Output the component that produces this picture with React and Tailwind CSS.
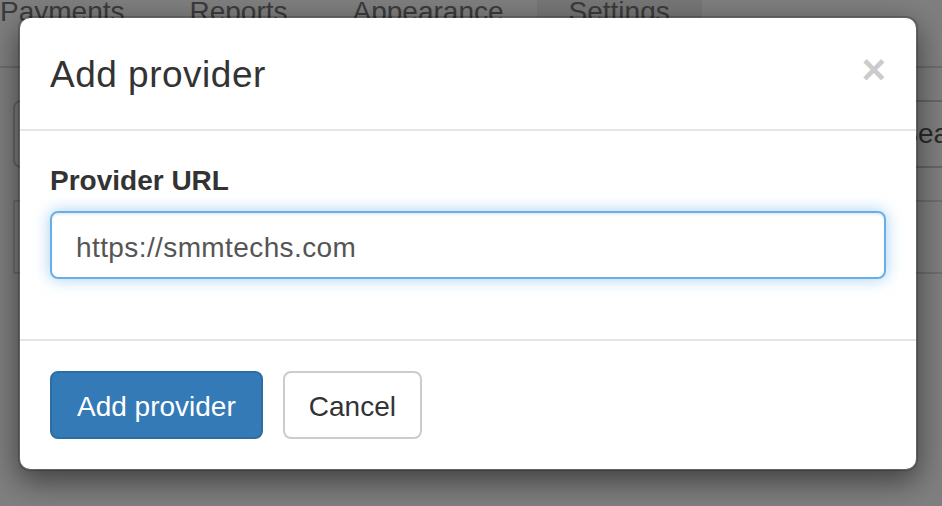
const tabs = ['Payments', 'Reports', 'Appearance', 'Settings'];

const Backdrop = () => {
  return (
    <div className="h-full w-full bg-white text-[#777]">
      <div className="h-[68px] border-b-2 border-[#ddd]">
        <div className="ml-[-32px] flex gap-[1px]">
          {tabs.map((t) => (
            <div
              key={t}
              className={
                t === 'Settings'
                  ? 'h-[66px] px-[32px] text-[28px] leading-[24px] bg-[#eeeeee]'
                  : 'h-[66px] px-[32px] text-[28px] leading-[24px]'
              }
            >
              {t}
            </div>
          ))}
        </div>
      </div>
      <div className="ml-[13px] mr-[-72px] mt-[32px] flex h-[68px] items-center justify-end rounded-[8px] border-2 border-[#ccc]">
        <div className="flex h-full items-center border-l-2 border-[#ccc] px-[24px] text-[28px] text-[#555]">Search</div>
      </div>
      <div className="ml-[13px] mr-[-40px] mt-[32px] h-[74px] border-2 border-[#ddd]" />
    </div>
  );
};

const App = () => {
  return (
    <div className="relative h-[506px] w-[942px] overflow-hidden font-['Liberation_Sans',Arial,sans-serif]">
      <Backdrop />
      <div className="absolute inset-0 bg-black/50" />
      <div className="absolute left-[18px] top-[16px] w-[900px] rounded-[12px] border-2 border-black/20 bg-white bg-clip-padding shadow-[0_10px_30px_rgba(0,0,0,0.5)]">
        <div className="flex items-start justify-between border-b-2 border-[#e5e5e5] p-[30px]">
          <h4 className="pt-[2px] text-[37px] leading-[49px] tracking-[0.5px] text-[#333]">Add provider</h4>
          <button className="mt-[1px] text-[42px] font-bold leading-none text-black opacity-20">×</button>
        </div>
        <div className="p-[30px]">
          <div className="mb-[30px]">
            <label className="mb-[10px] inline-block text-[28px] font-bold leading-[40px] text-[#333]">Provider URL</label>
            <input
              className="block h-[68px] w-full rounded-[8px] border-2 border-[#66afe9] px-[24px] pb-[9px] pt-[15px] text-[28px] tracking-[0.4px] text-[#555] outline-none shadow-[inset_0_2px_2px_rgba(0,0,0,0.075),0_0_16px_rgba(102,175,233,0.6)]"
              defaultValue="https://smmtechs.com"
            />
          </div>
        </div>
        <div className="flex gap-[20px] border-t-2 border-[#e5e5e5] p-[30px]">
          <button className="h-[68px] rounded-[8px] border-2 border-[#2e6da4] bg-[#337ab7] px-[25px] pt-[3px] text-[28px] leading-[40px] text-white">
            Add provider
          </button>
          <button className="h-[68px] rounded-[8px] border-2 border-[#ccc] bg-white px-[24px] pt-[3px] text-[28px] leading-[40px] text-[#333]">
            Cancel
          </button>
        </div>
      </div>
    </div>
  );
};

export default App;
